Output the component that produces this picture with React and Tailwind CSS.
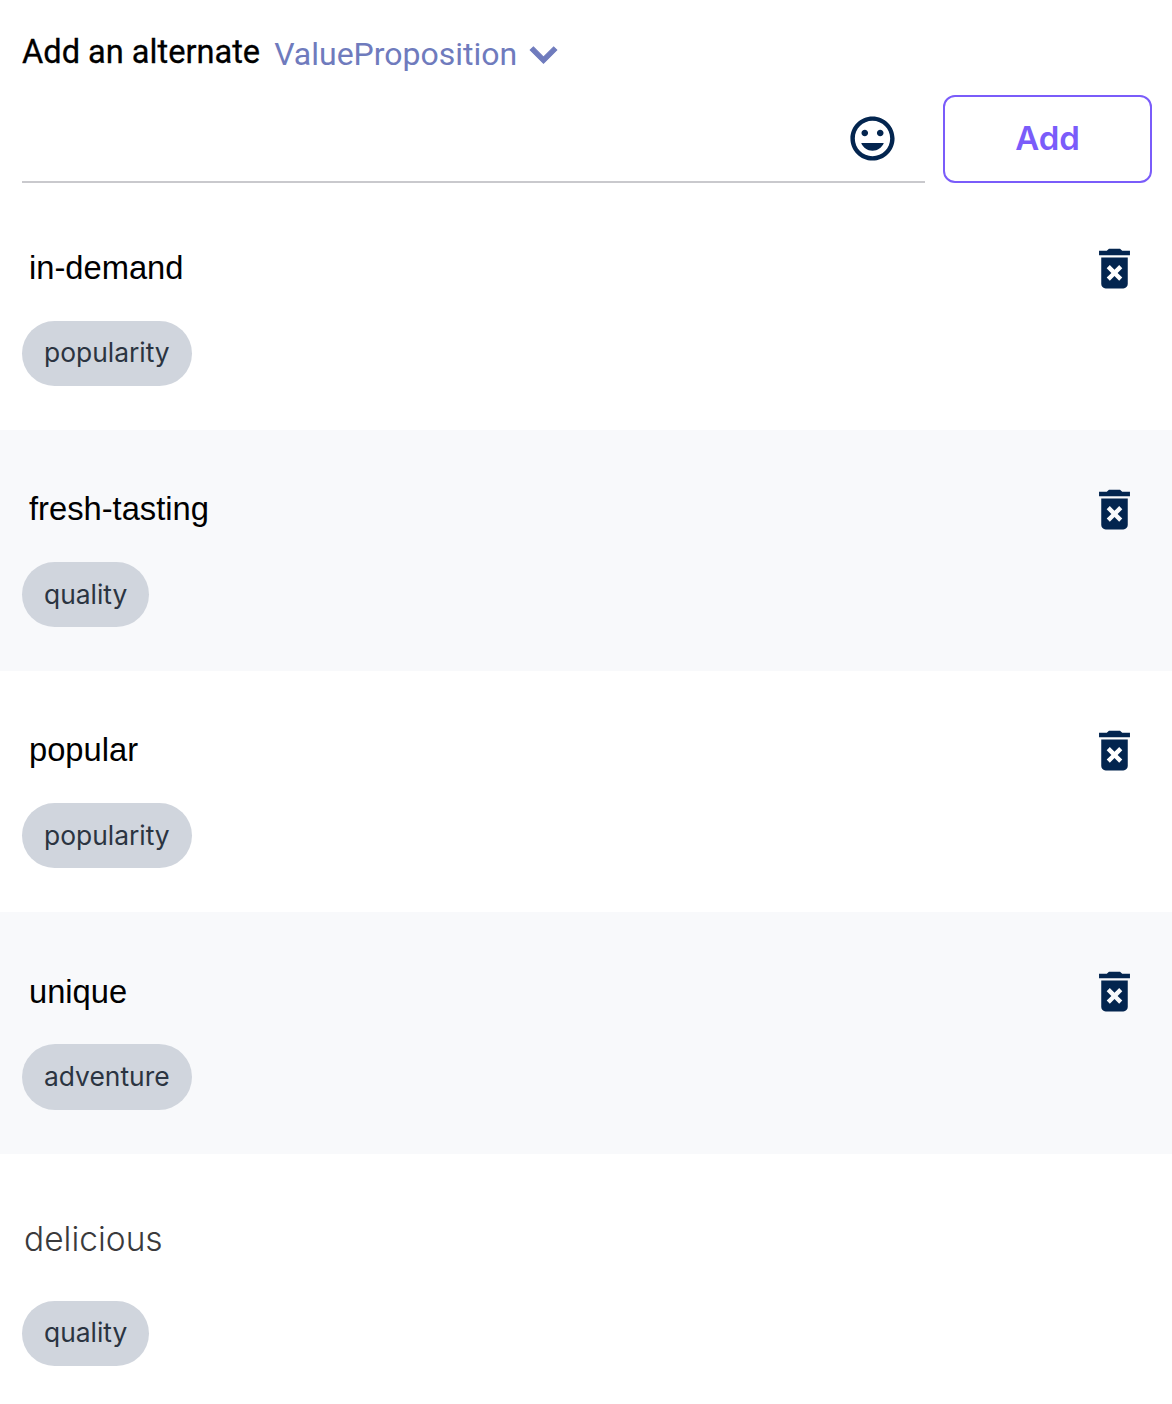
const items = [
  { name: "in-demand", tag: "popularity" },
  { name: "fresh-tasting", tag: "quality", shaded: true },
  { name: "popular", tag: "popularity" },
  { name: "unique", tag: "adventure", shaded: true },
];

function Tag({ children }) {
  return (
    <span className="inline-flex h-[65.15px] items-center rounded-full bg-[#d0d5dd] px-[22px] pb-[2px] font-['Inter',sans-serif] text-[26.4px] leading-none text-[#2b3441]">
      {children}
    </span>
  );
}

function DeleteIcon() {
  return (
    <svg viewBox="0 0 24 24" className="h-[53px] w-[53px] fill-[#03254f]">
      <path d="M6 19c0 1.1.9 2 2 2h8c1.1 0 2-.9 2-2V7H6v12zm2.46-7.12l1.41-1.41L12 12.59l2.12-2.12 1.41 1.41L13.41 14l2.12 2.12-1.41 1.41L12 15.41l-2.12 2.12-1.41-1.41L10.59 14l-2.13-2.12zM15.5 4l-1-1h-5l-1 1H5v2h14V4z" />
    </svg>
  );
}

function Row({ name, tag, shaded }) {
  return (
    <div className={shaded ? "bg-[#f8f9fb] pb-[44px] pl-[22px] pr-[31px] pt-[52px]" : "bg-white pb-[44px] pl-[22px] pr-[31px] pt-[52px]"}>
      <div className="flex h-[54px] items-center justify-between pl-[7px]">
        <span className="pb-[0.6px] font-['Liberation_Sans',sans-serif] text-[32.7px] text-black">{name}</span>
        <DeleteIcon />
      </div>
      <div className="mt-[26px] flex">
        <Tag>{tag}</Tag>
      </div>
    </div>
  );
}

export default function App() {
  return (
    <div className="h-[1404px] w-[1172px] overflow-hidden bg-white">
      <div className="h-[189px] pl-[22px] pr-[20px] pt-[28px]">
        <div className="flex h-[52px] items-center">
          <span className="-mt-[4px] font-['Roboto',sans-serif] text-[32.6px] text-black [-webkit-text-stroke:0.3px_black]">Add an alternate</span>
          <span className="ml-[14px] font-['Roboto',sans-serif] text-[32px] text-[#6f7bbd]">ValueProposition</span>
          <svg viewBox="0 0 24 24" className="h-[53px] w-[53px] fill-[#6f7bbd] stroke-[#6f7bbd] stroke-[0.5]">
            <path d="M7.41 8.59L12 13.17l4.59-4.58L18 10l-6 6-6-6 1.41-1.41z" />
          </svg>
        </div>
        <div className="mt-[15px] flex items-stretch gap-[18px]">
          <div className="flex h-[88px] flex-1 items-center justify-end border-b-2 border-[#c9c9cd] pr-[26px]">
            <svg viewBox="0 0 24 24" className="h-[53px] w-[53px] fill-[#03254f]">
              <path d="M11.99 2C6.47 2 2 6.48 2 12s4.47 10 9.99 10C17.52 22 22 17.52 22 12S17.52 2 11.99 2zM12 20c-4.42 0-8-3.58-8-8s3.58-8 8-8 8 3.58 8 8-3.58 8-8 8zm3.5-9c.83 0 1.5-.67 1.5-1.5S16.33 8 15.5 8 14 8.67 14 9.5s.67 1.5 1.5 1.5zm-7 0c.83 0 1.5-.67 1.5-1.5S9.33 8 8.5 8 7 8.67 7 9.5 7.67 11 8.5 11zm3.5 6.5c2.33 0 4.31-1.46 5.11-3.5H6.89c.8 2.04 2.78 3.5 5.11 3.5z" />
            </svg>
          </div>
          <button className="h-[88px] w-[209px] rounded-[12px] border-2 border-[#7a5cfa] bg-white font-['Inter',sans-serif] text-[33px] font-semibold text-[#7a5cfa]">
            Add
          </button>
        </div>
      </div>
      {items.map((item) => (
        <Row key={item.name} {...item} />
      ))}
      <div className="bg-white px-[22px] pt-[64px]">
        <div className="flex h-[44px] items-center pl-[2px] font-['Inter',sans-serif] text-[33.5px] font-light text-[#3a3a3c]">delicious</div>
        <div className="mt-[39px] flex">
          <Tag>quality</Tag>
        </div>
      </div>
    </div>
  );
}
